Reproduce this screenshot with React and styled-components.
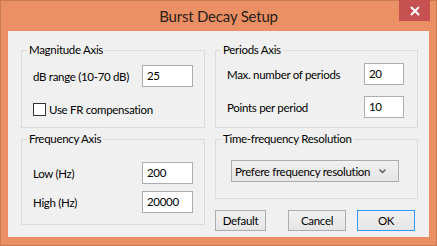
import React from 'react';
import styled, { createGlobalStyle } from 'styled-components';

const GlobalStyle = createGlobalStyle`
    html, body {
        margin: 0;
        padding: 0;
        background: #fff;
    }
    * {
        box-sizing: border-box;
    }
`;

const StyledWindow = styled.div`
    width: 437px;
    height: 246px;
    background: #ea9064;
    border: 1px solid #c97a52;
    display: flex;
    flex-direction: column;
    font-family: Lato, "Noto Sans", sans-serif;
    font-size: 11.5px;
    letter-spacing: -0.3px;
    color: #000;
    white-space: nowrap;
`;

const StyledTitleBar = styled.div`
    height: 30px;
    display: grid;
    grid-template-columns: 1fr auto 1fr;
    align-items: start;
`;

const StyledTitle = styled.div`
    grid-column: 2;
    font-size: 15px;
    letter-spacing: -0.2px;
    line-height: 30px;
    color: #2b2019;
`;

const StyledClose = styled.div`
    grid-column: 3;
    justify-self: end;
    margin-right: 6px;
    margin-top: -1px;
    width: 31px;
    height: 21px;
    background: #c75050;
    display: flex;
    align-items: center;
    justify-content: center;
`;

const StyledClient = styled.div`
    flex: 1;
    margin: 0 7px 8px 7px;
    background: #f0f0f0;
    padding: 19px 0 0 13px;
    display: grid;
    grid-template-columns: 184px 203px;
    column-gap: 10px;
    align-items: start;
`;

const StyledColumn = styled.div`
    display: flex;
    flex-direction: column;
    gap: 11px;
`;

const StyledGroup = styled.section`
    border: 1px solid #dcdcdc;
    height: ${props => props.$height}px;
    display: flex;
    flex-direction: column;
`;

const StyledCaption = styled.h2`
    align-self: flex-start;
    margin: -8px 0 0 5px;
    padding: 0 2px;
    background: #f0f0f0;
    font-size: 11.5px;
    font-weight: normal;
    line-height: 14px;
`;

const StyledGroupBody = styled.div`
    padding: ${props => props.$pad};
`;

const StyledRow = styled.div`
    display: flex;
    align-items: center;
    justify-content: space-between;
    height: 22px;
    margin-top: ${props => props.$gap || 0}px;
`;

const StyledInput = styled.div`
    width: ${props => props.$width}px;
    height: 22px;
    background: #fff;
    border: 1px solid #abadb3;
    padding-left: 4px;
    line-height: 20px;
`;

const StyledCheckRow = styled.label`
    display: flex;
    align-items: center;
    gap: 3px;
    height: 16px;
    margin-top: 14px;
`;

const StyledCheckbox = styled.span`
    width: 13px;
    height: 13px;
    background: #fff;
    border: 1px solid #333;
`;

const StyledCombo = styled.div`
    width: 168px;
    height: 22px;
    border: 1px solid #acacac;
    background: linear-gradient(#f0f0f0, #e5e5e5);
    display: flex;
    align-items: center;
    justify-content: space-between;
    padding: 0 12px 0 3px;
    overflow: hidden;

    svg {
        flex-shrink: 0;
    }
`;

const StyledButtons = styled.div`
    display: flex;
`;

const StyledButton = styled.div`
    width: ${props => props.$width}px;
    height: 21px;
    margin-left: ${props => props.$gap}px;
    border: 1px solid ${props => props.$default ? '#3399ff' : '#acacac'};
    background: linear-gradient(#f0f0f0, #e5e5e5);
    display: flex;
    align-items: center;
    justify-content: center;
`;

const App = () => (
    <StyledWindow>
        <GlobalStyle />
        <StyledTitleBar>
            <StyledTitle>Burst Decay Setup</StyledTitle>
            <StyledClose>
                <svg width="10" height="10" viewBox="0 0 10 10">
                    <path d="M1 1 L9 9 M9 1 L1 9" stroke="#fff" strokeWidth="2" />
                </svg>
            </StyledClose>
        </StyledTitleBar>
        <StyledClient>
            <StyledColumn>
                <StyledGroup $height={78}>
                    <StyledCaption>Magnitude Axis</StyledCaption>
                    <StyledGroupBody $pad="8px 11px 0 11px">
                        <StyledRow>
                            <span>dB range (10-70 dB)</span>
                            <StyledInput $width={51}>25</StyledInput>
                        </StyledRow>
                        <StyledCheckRow>
                            <StyledCheckbox />
                            <span>Use FR compensation</span>
                        </StyledCheckRow>
                    </StyledGroupBody>
                </StyledGroup>
                <StyledGroup $height={86}>
                    <StyledCaption>Frequency Axis</StyledCaption>
                    <StyledGroupBody $pad="16px 11px 0 11px">
                        <StyledRow>
                            <span>Low (Hz)</span>
                            <StyledInput $width={51}>200</StyledInput>
                        </StyledRow>
                        <StyledRow $gap={7}>
                            <span>High (Hz)</span>
                            <StyledInput $width={51}>20000</StyledInput>
                        </StyledRow>
                    </StyledGroupBody>
                </StyledGroup>
            </StyledColumn>
            <StyledColumn>
                <StyledGroup $height={78}>
                    <StyledCaption>Periods Axis</StyledCaption>
                    <StyledGroupBody $pad="6px 13px 0 11px">
                        <StyledRow>
                            <span>Max. number of periods</span>
                            <StyledInput $width={40}>20</StyledInput>
                        </StyledRow>
                        <StyledRow $gap={11}>
                            <span>Points per period</span>
                            <StyledInput $width={40}>10</StyledInput>
                        </StyledRow>
                    </StyledGroupBody>
                </StyledGroup>
                <StyledGroup $height={60}>
                    <StyledCaption>Time-frequency Resolution</StyledCaption>
                    <StyledGroupBody $pad="14px 0 0 15px">
                        <StyledCombo>
                            <span>Prefere frequency resolution</span>
                            <svg width="7" height="5" viewBox="0 0 7 5">
                                <path d="M0.5 0.5 L3.5 3.5 L6.5 0.5" stroke="#555" strokeWidth="1.4" fill="none" />
                            </svg>
                        </StyledCombo>
                    </StyledGroupBody>
                </StyledGroup>
                <StyledButtons>
                    <StyledButton $width={51} $gap={0}>Default</StyledButton>
                    <StyledButton $width={58} $gap={22}>Cancel</StyledButton>
                    <StyledButton $width={58} $gap={11} $default>OK</StyledButton>
                </StyledButtons>
            </StyledColumn>
        </StyledClient>
    </StyledWindow>
);

export default App;
